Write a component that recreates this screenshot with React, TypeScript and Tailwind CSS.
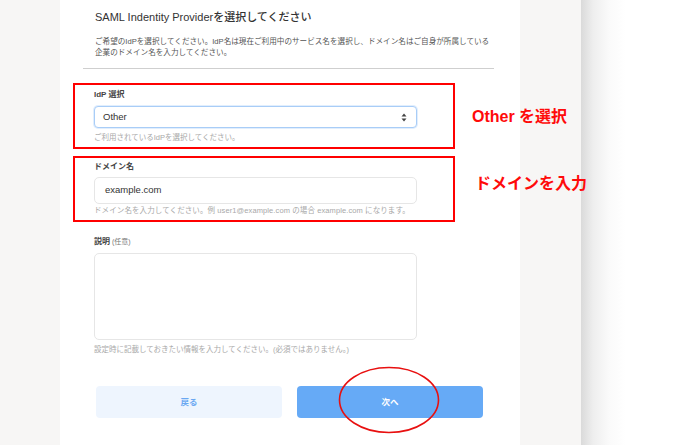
import React from "react";

const FONT = { fontFamily: '"Liberation Sans", "Noto Sans CJK JP", sans-serif' };

function SelectArrows() {
  return (
    <svg width="6" height="9" viewBox="0 0 6 9" className="shrink-0">
      <path d="M3 0.5 L5.5 3.5 H0.5 Z" fill="#444" />
      <path d="M3 8.5 L5.5 5.5 H0.5 Z" fill="#444" />
    </svg>
  );
}

export default function App() {
  return (
    <div className="relative flex h-[445px] w-[700px] overflow-hidden bg-white" style={FONT}>
      <div className="w-[60px] shrink-0 bg-[#f7f6f5]" />
      <div className="flex w-[460px] shrink-0 flex-col bg-white">
        <div className="mt-[10px] pl-[35px] text-[11px] leading-[14px] font-medium text-[#333]">
          SAML Indentity Providerを選択してください
        </div>
        <div className="mt-[12px] pl-[35px] pr-[30px] text-[7.6px] leading-[11px] text-[#555]">
          ご希望のIdPを選択してください。IdP名は現在ご利用中のサービス名を選択し、ドメイン名はご自身が所属している
          <br />
          企業のドメイン名を入力してください。
        </div>
        <div className="ml-[23px] mt-[10px] h-px w-[411px] bg-[#cfcfcf]" />

        <div className="ml-[13px] mt-[14px] flex h-[66px] w-[382px] flex-col border-2 border-[#ff0000] pl-[19px] pt-[5px]">
          <div className="text-[8px] leading-[10px] font-bold text-[#444]">IdP 選択</div>
          <div className="mt-[6px] flex h-[22px] w-[323px] items-center justify-between rounded-[4px] border border-[#a9cdf7] bg-white pl-[8px] pr-[9px] shadow-[0_0_0_1px_rgba(170,205,250,0.35)]">
            <span className="text-[9.5px] text-[#333]">Other</span>
            <SelectArrows />
          </div>
          <div className="mt-[5px] text-[7.5px] leading-[10px] text-[#a8a8a8]">
            ご利用されているIdPを選択してください。
          </div>
        </div>

        <div className="ml-[13px] mt-[7px] flex h-[66px] w-[382px] flex-col border-2 border-[#ff0000] pl-[19px] pt-[4px]">
          <div className="text-[8px] leading-[10px] font-bold text-[#444]">ドメイン名</div>
          <div className="mt-[5px] flex h-[27px] w-[323px] items-center rounded-[5px] border border-[#e6e6e6] bg-white pl-[10px]">
            <span className="text-[9.5px] text-[#333]">example.com</span>
          </div>
          <div className="mt-[2px] text-[7.5px] leading-[10px] tracking-[0.1px] text-[#a8a8a8]">
            ドメイン名を入力してください。例 user1@example.com の場合 example.com になります。
          </div>
        </div>

        <div className="mt-[15px] flex flex-col pl-[34px]">
          <div className="text-[8px] leading-[10px] text-[#444]">
            <span className="font-bold">説明</span>
            <span className="text-[7px] text-[#777]"> (任意)</span>
          </div>
          <div className="mt-[6px] h-[87px] w-[323px] rounded-[5px] border border-[#e6e6e6] bg-white" />
          <div className="mt-[5px] text-[7.5px] leading-[10px] text-[#a8a8a8]">
            設定時に記載しておきたい情報を入力してください。(必須ではありません。)
          </div>
        </div>

        <div className="ml-[36px] mt-[31px] flex gap-[15px]">
          <div className="flex h-[32px] w-[186px] items-center justify-center rounded-[4px] bg-[#eef5fe] text-[8.5px] font-bold text-[#6aa8f2]">
            戻る
          </div>
          <div className="flex h-[32px] w-[186px] items-center justify-center rounded-[4px] bg-[#66aaf6] text-[8.5px] font-bold text-white">
            次へ
          </div>
        </div>
      </div>
      <div className="w-[61px] shrink-0 bg-[#f7f6f5]" />
      <div className="flex-1 bg-[linear-gradient(to_right,#dadada_0px,#eeeeee_12px,#fafafa_28px,#ffffff_45px)]" />

      <div className="absolute left-[472px] top-[106px] text-[16px] leading-[22px] font-bold whitespace-nowrap text-[#ff0a0a]">
        Other を選択
      </div>
      <div className="absolute left-[475px] top-[173px] text-[16px] leading-[22px] font-bold whitespace-nowrap text-[#ff0a0a]">
        ドメインを入力
      </div>
      <svg className="absolute left-[336px] top-[365px]" width="106" height="70" viewBox="0 0 106 70">
        <ellipse cx="53" cy="35" rx="49.5" ry="32.5" fill="none" stroke="#e81010" strokeWidth="1.6" />
      </svg>
    </div>
  );
}
